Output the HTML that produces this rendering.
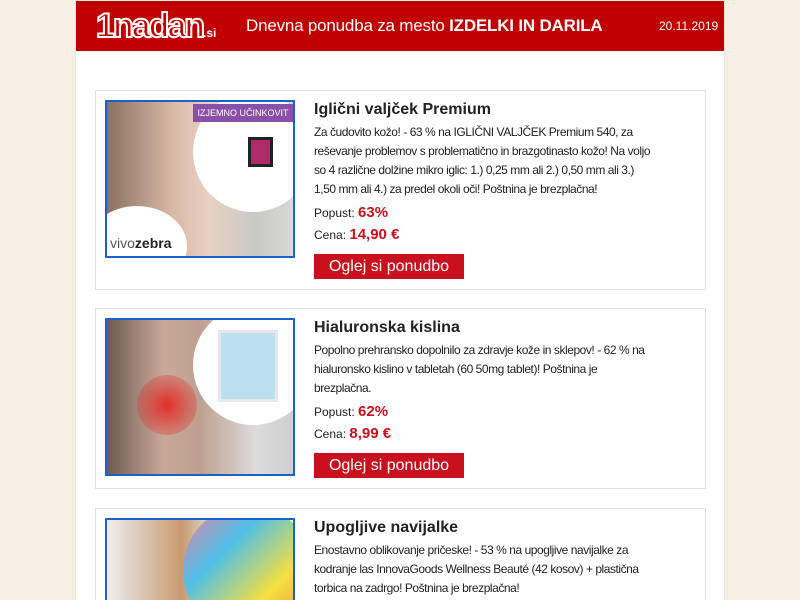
<!DOCTYPE html>
<html><head><meta charset="utf-8"><style>
*{margin:0;padding:0;box-sizing:border-box}
html,body{width:800px;height:600px;overflow:hidden}
body{background:#f5efe4;font-family:"Liberation Sans",sans-serif;position:relative}
.wrap{position:absolute;left:75px;top:1px;width:650px;height:599px;overflow:hidden;background:#fff;border-left:1px solid #ebe4d8;border-right:1px solid #ebe4d8}
.hdr{position:absolute;left:0;top:0;width:650px;height:50px;background:#c00000;color:#fff}
.logo{position:absolute;left:20px;top:8px;font:bold 34px/34px "Liberation Sans",sans-serif;color:#c00000;-webkit-text-stroke:2px #fff;letter-spacing:-2px}
.logo small{font-size:12px;-webkit-text-stroke:0;color:#fff;letter-spacing:0}
.ttl{position:absolute;left:170px;top:15px;font-size:17px;white-space:nowrap;letter-spacing:-0.2px}
.date{position:absolute;left:583px;top:18px;font-size:12px}
.card{position:absolute;left:19px;width:611px;border:1px solid #e2e2e2;background:#fff}
.img{position:absolute;left:9px;top:9px;width:190px;height:158px;border:2px solid #1a63c6;overflow:hidden}
.txt{position:absolute;left:218px;top:9px;white-space:nowrap;color:#222}
.txt h3{font-size:16px;font-weight:bold;line-height:20px;margin-bottom:3px}
.txt p{font-size:12px;line-height:19px;letter-spacing:-0.45px}
.pr{font-size:12px;line-height:22px;margin-top:3px}
.pr b{color:#c8101e;font-size:15px}
.btn{margin-top:8px;width:150px;height:25px;background:#c8101e;color:#fff;font-size:16px;line-height:25px;text-align:center}
</style></head><body>
<div class="wrap">
<div class="hdr"><div class="logo">1nadan<small>.si</small></div>
<div class="ttl">Dnevna ponudba za mesto <b>IZDELKI IN DARILA</b></div>
<div class="date">20.11.2019</div></div>

<div class="card" style="top:89px;height:200px">
<div class="img" style="background:linear-gradient(90deg,#8a7060 0%,#d9b8a5 35%,#e8d2c4 55%,#c9c9c6 80%,#d8d8d6 100%)">
<div style="position:absolute;right:-20px;top:-10px;width:120px;height:120px;border-radius:50%;background:#fff"></div>
<div style="position:absolute;right:0;top:2px;width:100px;height:18px;background:#8a4fa8;color:#fff;font-size:9px;line-height:18px;text-align:center;white-space:nowrap">IZJEMNO UČINKOVIT</div>
<div style="position:absolute;right:20px;top:35px;width:25px;height:30px;background:#b02a6a;border:3px solid #222"></div>
<div style="position:absolute;left:-20px;bottom:-30px;width:100px;height:80px;border-radius:50%;background:#fff"></div>
<div style="position:absolute;left:3px;bottom:5px;font-size:14px;color:#555">vivo<b style="color:#222">zebra</b></div>
</div>
<div class="txt"><h3>Iglični valjček Premium</h3>
<p>Za čudovito kožo! - 63 % na IGLIČNI VALJČEK Premium 540, za<br>reševanje problemov s problematično in brazgotinasto kožo! Na voljo<br>so 4 različne dolžine mikro iglic: 1.) 0,25 mm ali 2.) 0,50 mm ali 3.)<br>1,50 mm ali 4.) za predel okoli oči! Poštnina je brezplačna!</p>
<div class="pr">Popust: <b>63%</b><br>Cena: <b>14,90 €</b></div>
<div class="btn">Oglej si ponudbo</div></div>
</div>

<div class="card" style="top:307px;height:181px">
<div class="img" style="background:linear-gradient(90deg,#6e5a52 0%,#c9a898 30%,#bfa091 50%,#dcdcdc 80%,#cfcfcf 100%)">
<div style="position:absolute;left:30px;top:55px;width:60px;height:60px;border-radius:50%;background:radial-gradient(#e0302a,rgba(224,48,42,0))"></div>
<div style="position:absolute;right:-20px;top:-15px;width:120px;height:120px;border-radius:50%;background:#fff"></div>
<div style="position:absolute;right:15px;top:10px;width:60px;height:72px;background:#bde0f0;border:3px solid #e8e8e8"></div>
</div>
<div class="txt"><h3>Hialuronska kislina</h3>
<p>Popolno prehransko dopolnilo za zdravje kože in sklepov! - 62 % na<br>hialuronsko kislino v tabletah (60 50mg tablet)! Poštnina je<br>brezplačna.</p>
<div class="pr">Popust: <b>62%</b><br>Cena: <b>8,99 €</b></div>
<div class="btn">Oglej si ponudbo</div></div>
</div>

<div class="card" style="top:507px;height:130px">
<div class="img" style="background:linear-gradient(90deg,#eee 0%,#c89a70 40%,#e9e9e9 60%,#fff 100%)">
<div style="position:absolute;right:-20px;top:-15px;width:130px;height:130px;border-radius:50%;background:linear-gradient(135deg,#f07aa0,#4fc0e8,#f5e040,#f08040)"></div>
</div>
<div class="txt"><h3>Upogljive navijalke</h3>
<p>Enostavno oblikovanje pričeske! - 53 % na upogljive navijalke za<br>kodranje las InnovaGoods Wellness Beauté (42 kosov) + plastična<br>torbica na zadrgo! Poštnina je brezplačna!</p></div>
</div>
</div>
</body></html>
